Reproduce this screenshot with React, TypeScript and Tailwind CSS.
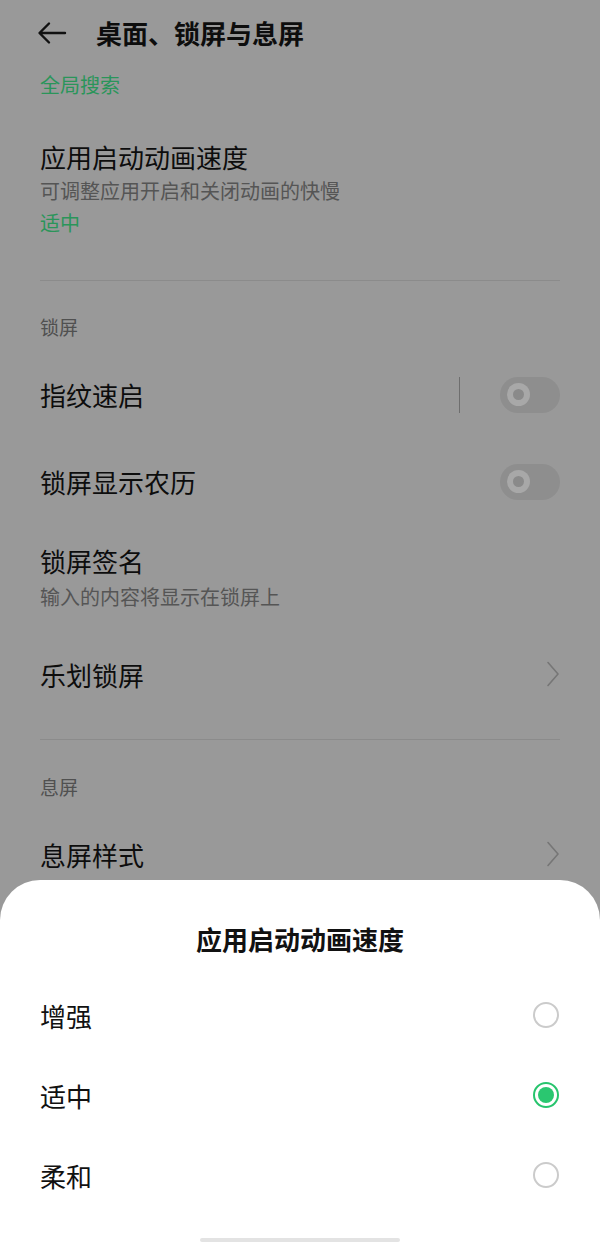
import React from 'react';

const FONT = { fontFamily: '"Noto Sans CJK SC", "Noto Sans", sans-serif' };

const Toggle: React.FC = () => (
  <div className="w-[60px] h-[36px] rounded-full bg-[#8e8e8e] flex items-center pl-[7px]">
    <div className="w-[23px] h-[23px] rounded-full bg-[#a8a8a8] flex items-center justify-center">
      <div className="w-[11px] h-[11px] rounded-full bg-[#8a8a8a]"></div>
    </div>
  </div>
);

const Chevron: React.FC = () => (
  <svg width="14" height="26" viewBox="0 0 14 26" fill="none">
    <path d="M2 1.5 L12 13 L2 24.5" stroke="#767676" strokeWidth="1.6" strokeLinecap="round" strokeLinejoin="round" />
  </svg>
);

const Radio: React.FC<{ checked?: boolean }> = ({ checked }) =>
  checked ? (
    <div className="w-[26px] h-[26px] rounded-full border-[2.5px] border-[#27c46d] flex items-center justify-center">
      <div className="w-[16px] h-[16px] rounded-full bg-[#2ac770]"></div>
    </div>
  ) : (
    <div className="w-[26px] h-[26px] rounded-full border-2 border-[#cbcbcb]"></div>
  );

const App: React.FC = () => {
  const options = [
    { label: '增强', checked: false },
    { label: '适中', checked: true },
    { label: '柔和', checked: false },
  ];

  return (
    <div className="relative w-[600px] h-[1243px] overflow-hidden bg-[#999999] text-[#0d0d0d]" style={FONT}>
      {/* header */}
      <div className="flex items-center h-[68px] pl-[37px] pb-[3px]">
        <svg width="30" height="24" viewBox="0 0 30 24" fill="none">
          <path d="M28 12 H3 M12 2.5 L2.5 12 L12 21.5" stroke="#111" strokeWidth="2.4" strokeLinecap="round" strokeLinejoin="round" />
        </svg>
        <h1 className="ml-[29px] text-[26px] leading-[34px] font-bold">桌面、锁屏与息屏</h1>
      </div>

      <div className="px-[40px]">
        <div className="h-[34px] flex items-center text-[20px] text-[#2a955a]">全局搜索</div>

        <div className="pt-[37px]">
          <div className="text-[26px] leading-[36px]">应用启动动画速度</div>
          <div className="text-[20px] leading-[32px] text-[#555555]">可调整应用开启和关闭动画的快慢</div>
          <div className="text-[20px] leading-[32px] text-[#2a955a]">适中</div>
        </div>

        <div className="mt-[41px] h-px bg-[#8b8b8b]"></div>

        <div className="pt-[32px] text-[19px] leading-[28px] text-[#505050]">锁屏</div>

        <div className="mt-[10px] h-[87px] flex items-center justify-between">
          <span className="text-[26px]">指纹速启</span>
          <div className="flex items-center">
            <div className="w-px h-[36px] bg-[#6e6e6e] mr-[40px]"></div>
            <Toggle />
          </div>
        </div>
        <div className="h-[87px] flex items-center justify-between">
          <span className="text-[26px]">锁屏显示农历</span>
          <Toggle />
        </div>

        <div className="pt-[18px]">
          <div className="text-[26px] leading-[36px]">锁屏签名</div>
          <div className="text-[20px] leading-[36px] text-[#555555]">输入的内容将显示在锁屏上</div>
        </div>

        <div className="mt-[18px] h-[82px] flex items-center justify-between">
          <span className="text-[26px]">乐划锁屏</span>
          <Chevron />
        </div>

        <div className="mt-[24px] h-px bg-[#8b8b8b]"></div>

        <div className="pt-[33px] text-[19px] leading-[28px] text-[#505050]">息屏</div>

        <div className="mt-[10px] h-[86px] flex items-center justify-between">
          <span className="text-[26px]">息屏样式</span>
          <Chevron />
        </div>
      </div>

      {/* bottom sheet */}
      <div className="absolute left-0 right-0 bottom-0 h-[363px] bg-white rounded-t-[40px] flex flex-col">
        <div className="pt-[39px] h-[79px] text-center text-[26px] leading-[40px] font-semibold text-[#111]">应用启动动画速度</div>
        <div className="mt-[16px] px-[40px]">
          {options.map(o => (
            <div key={o.label} className="h-[80px] flex items-center justify-between">
              <span className="text-[26px] text-[#111]">{o.label}</span>
              <div className="mr-[1px]">
                <Radio checked={o.checked} />
              </div>
            </div>
          ))}
        </div>
        <div className="mt-auto mb-[1px] mx-auto w-[200px] h-[4px] rounded-full bg-[#e3e3e3]"></div>
      </div>
    </div>
  );
};

export default App;
